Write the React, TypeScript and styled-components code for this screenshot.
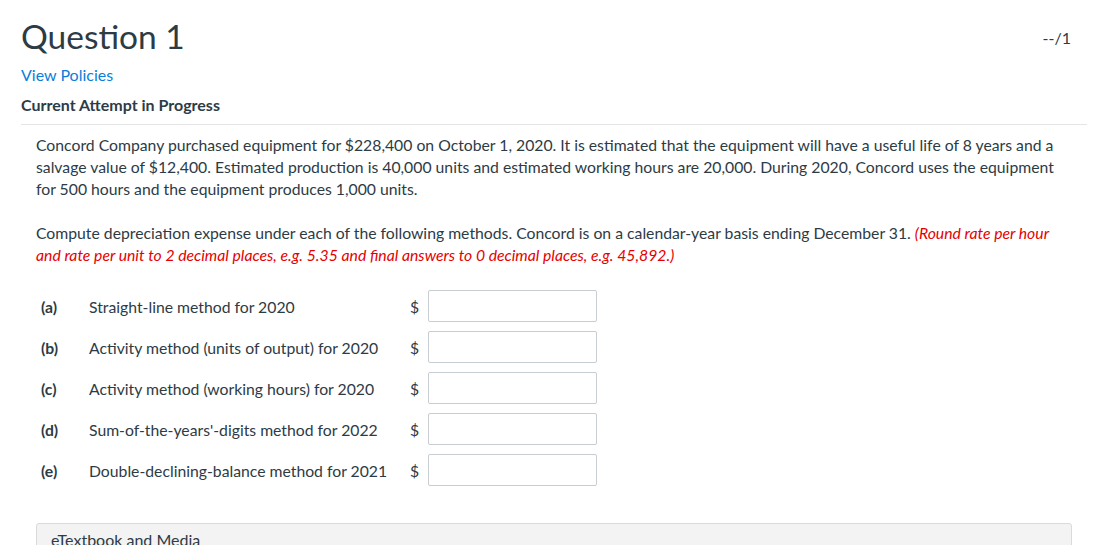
import React from 'react';
import styled, { createGlobalStyle } from 'styled-components';

const GlobalStyle = createGlobalStyle`
  body {
    margin: 0;
    background: #fff;
    font-family: Lato, "Open Sans", sans-serif;
    color: #2d3b45;
  }
`;

const Page = styled.div`
  padding: 0 8px 0 21px;
  overflow: hidden;
  height: 545px;
`;

const Header = styled.div`
  display: flex;
  justify-content: space-between;
  align-items: flex-start;
  padding-top: 14px;
`;

const Title = styled.h1`
  margin: 0;
  font-size: 33.5px;
  font-weight: 400;
  line-height: 44px;
`;

const Score = styled.span`
  font-size: 16px;
  margin: 14px 16px 0 0;
`;

const PolicyLink = styled.a`
  display: block;
  margin-top: 7px;
  color: #0a7ed8;
  font-size: 16px;
  line-height: 20px;
  text-decoration: none;
`;

const Attempt = styled.div`
  margin-top: 10px;
  font-size: 16px;
  font-weight: 700;
  line-height: 20px;
  padding-bottom: 9px;
  border-bottom: 1px solid #e5e5e5;
`;

const Body = styled.div`
  padding: 9px 15px 0 15px;
`;

const Para = styled.p`
  margin: 0 0 22px;
  font-size: 15.75px;
  line-height: 22px;
`;

const Hint = styled.em`
  color: #e60000;
`;

const Rows = styled.div`
  display: flex;
  flex-direction: column;
  gap: 9px;
  margin-top: 24px;
  padding-left: 5px;
`;

const Row = styled.div`
  display: flex;
  align-items: center;
  font-size: 15.75px;
`;

const Letter = styled.span`
  width: 48px;
  font-weight: 700;
`;

const Label = styled.span`
  width: 321px;
  white-space: nowrap;
`;

const Dollar = styled.span`
  width: 18px;
`;

const Field = styled.input`
  width: 169px;
  height: 32px;
  box-sizing: border-box;
  border: 1px solid #c7cdd1;
  border-radius: 2px;
  font: inherit;
  padding: 0 6px;
`;

const MediaBox = styled.div`
  margin: 37px 0 0;
  width: 1036px;
  height: 40px;
  box-sizing: border-box;
  background: #f3f3f3;
  border: 1px solid #dadada;
  border-radius: 3px;
  padding: 6px 14px;
  font-size: 16px;
`;

const rows = [
  ['(a)', 'Straight-line method for 2020'],
  ['(b)', 'Activity method (units of output) for 2020'],
  ['(c)', 'Activity method (working hours) for 2020'],
  ['(d)', "Sum-of-the-years'-digits method for 2022"],
  ['(e)', 'Double-declining-balance method for 2021'],
];

export default function App() {
  return (
    <>
      <GlobalStyle />
      <Page>
        <Header>
          <Title>Question 1</Title>
          <Score>--/1</Score>
        </Header>
        <PolicyLink href="#">View Policies</PolicyLink>
        <Attempt>Current Attempt in Progress</Attempt>
        <Body>
          <Para>
            Concord Company purchased equipment for $228,400 on October 1, 2020. It is estimated that the equipment will have a useful life of 8 years and a salvage value of $12,400. Estimated production is 40,000 units and estimated working hours are 20,000. During 2020, Concord uses the equipment for 500 hours and the equipment produces 1,000 units.
          </Para>
          <Para>
            Compute depreciation expense under each of the following methods. Concord is on a calendar-year basis ending December 31.{' '}
            <Hint>(Round rate per hour and rate per unit to 2 decimal places, e.g. 5.35 and final answers to 0 decimal places, e.g. 45,892.)</Hint>
          </Para>
          <Rows>
            {rows.map(([l, t]) => (
              <Row key={l}>
                <Letter>{l}</Letter>
                <Label>{t}</Label>
                <Dollar>$</Dollar>
                <Field type="text" />
              </Row>
            ))}
          </Rows>
          <MediaBox>eTextbook and Media</MediaBox>
        </Body>
      </Page>
    </>
  );
}
